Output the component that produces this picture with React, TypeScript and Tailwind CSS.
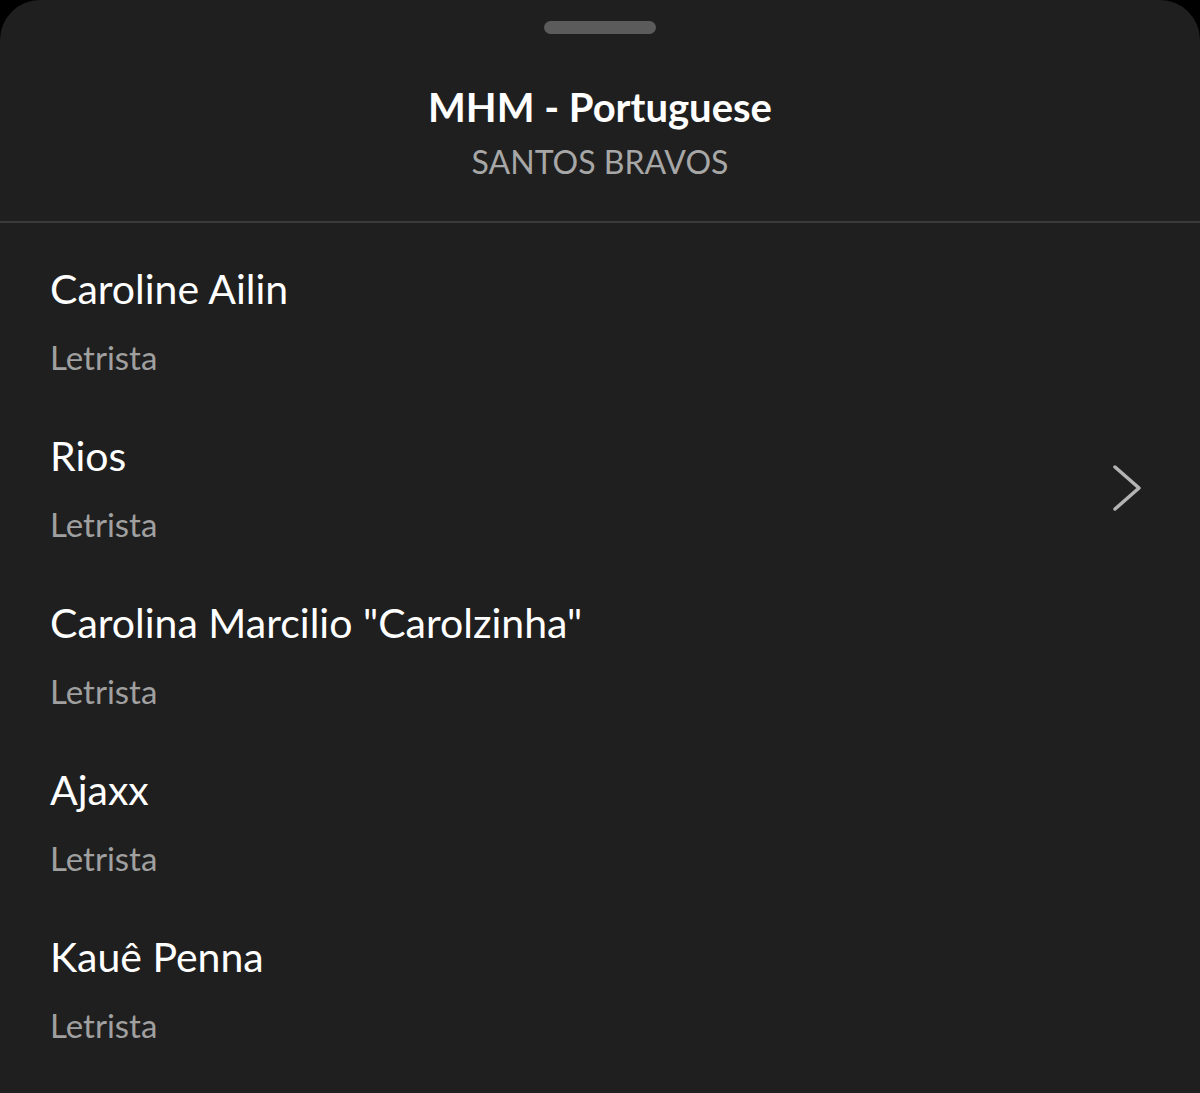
import React from "react";

const people = [
  { name: "Caroline Ailin", chevron: false },
  { name: "Rios", chevron: true },
  { name: 'Carolina Marcilio "Carolzinha"', chevron: false },
  { name: "Ajaxx", chevron: false },
  { name: "Kauê Penna", chevron: false },
];

export default function App() {
  return (
    <div className="w-[1200px] h-[1093px] bg-black overflow-hidden" style={{ fontFamily: "Lato, 'Noto Sans', sans-serif" }}>
      <div className="w-full h-full bg-[#1f1f1f] rounded-t-[40px] flex flex-col">
        <div className="flex justify-center pt-[21px] shrink-0">
          <div className="w-[112px] h-[13px] rounded-full bg-[#5b5b5b]" />
        </div>
        <div className="flex flex-col items-center pt-[49px] h-[189px] shrink-0 border-b-2 border-[#3a3a3a]">
          <div className="text-[40px] leading-[48px] font-bold text-white">MHM - Portuguese</div>
          <div className="text-[32px] leading-[40px] text-[#a7a7a7] mt-[11px]">SANTOS BRAVOS</div>
        </div>
        <div className="flex flex-col pt-[41px] shrink-0">
          {people.map((p) => (
            <div key={p.name} className="h-[167px] shrink-0 pl-[50px] pr-[56px] flex items-start justify-between">
              <div className="flex flex-col">
                <div className="text-[41px] leading-[50px] text-white">{p.name}</div>
                <div className="text-[33px] leading-[40px] text-[#a0a0a0] mt-[23px]">Letrista</div>
              </div>
              {p.chevron && (
                <svg className="mt-[32px]" width="36" height="50" viewBox="0 0 36 50" fill="none">
                  <path d="M7 4 L31 25 L7 46" stroke="#b3b3b3" strokeWidth="3.5" strokeLinecap="round" strokeLinejoin="round" />
                </svg>
              )}
            </div>
          ))}
        </div>
      </div>
    </div>
  );
}
